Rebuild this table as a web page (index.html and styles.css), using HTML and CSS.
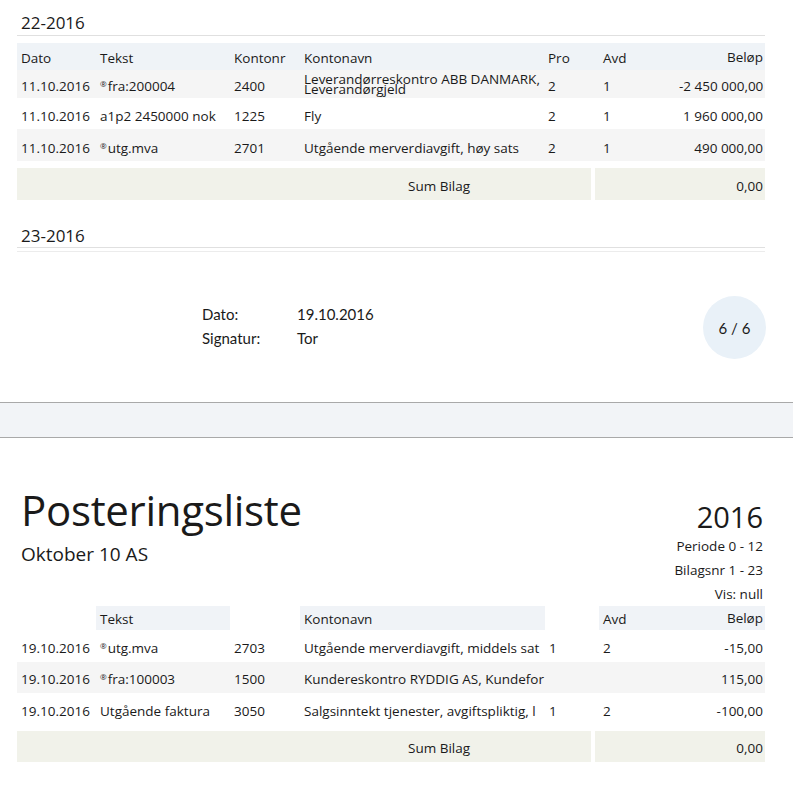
FILE: index.html
```html
<!DOCTYPE html>
<html lang="no">
<head>
<meta charset="utf-8">
<title>Posteringsliste</title>
<link rel="stylesheet" href="styles.css">
</head>
<body>
<div class="sheet">
  <h2 class="bilag-title">22-2016</h2>
  <table class="ledger">
    <colgroup>
      <col class="c-dato"><col class="c-tekst"><col class="c-konto"><col class="c-navn"><col class="c-pro"><col class="c-avd"><col class="c-belop">
    </colgroup>
    <thead>
      <tr class="head">
        <th>Dato</th><th>Tekst</th><th>Kontonr</th><th>Kontonavn</th><th>Pro</th><th>Avd</th><th class="num">Beløp</th>
      </tr>
    </thead>
    <tbody>
      <tr class="r1 shade">
        <td>11.10.2016</td><td><span class="reg">®</span>fra:200004</td><td>2400</td><td><div class="wrap2">Leverandørreskontro ABB DANMARK, Leverandørgjeld</div></td><td>2</td><td>1</td><td class="num">-2 450 000,00</td>
      </tr>
      <tr class="r2">
        <td>11.10.2016</td><td>a1p2 2450000 nok</td><td>1225</td><td>Fly</td><td>2</td><td>1</td><td class="num">1 960 000,00</td>
      </tr>
      <tr class="r3 shade">
        <td>11.10.2016</td><td><span class="reg">®</span>utg.mva</td><td>2701</td><td>Utgående merverdiavgift, høy sats</td><td>2</td><td>1</td><td class="num">490 000,00</td>
      </tr>
    </tbody>
  </table>
  <div class="sum-row">
    <div class="sum-label">Sum Bilag</div>
    <div class="sum-value">0,00</div>
  </div>

  <h2 class="bilag-title second">23-2016</h2>
  <div class="empty-table"></div>

  <div class="footer-row">
    <dl class="signature">
      <div class="sig-line"><dt>Dato:</dt><dd>19.10.2016</dd></div>
      <div class="sig-line"><dt>Signatur:</dt><dd>Tor</dd></div>
    </dl>
    <div class="page-badge">6 / 6</div>
  </div>
</div>

<div class="page-break"></div>

<div class="sheet sheet2">
  <header class="report-head">
    <div class="report-left">
      <h1 class="report-title">Posteringsliste</h1>
      <div class="company">Oktober 10 AS</div>
    </div>
    <div class="report-right">
      <div class="year">2016</div>
      <div class="meta">Periode 0 - 12</div>
      <div class="meta">Bilagsnr 1 - 23</div>
      <div class="meta">Vis: null</div>
    </div>
  </header>
  <table class="ledger ledger2">
    <colgroup>
      <col class="c-dato"><col class="c-tekst"><col class="c-konto"><col class="c-navn2"><col class="c-pro2"><col class="c-avd"><col class="c-belop">
    </colgroup>
    <thead>
      <tr class="head2">
        <th class="blank"></th><th>Tekst</th><th class="blank"></th><th>Kontonavn</th><th class="blank"></th><th>Avd</th><th class="num">Beløp</th>
      </tr>
    </thead>
    <tbody>
      <tr class="q1">
        <td>19.10.2016</td><td><span class="reg">®</span>utg.mva</td><td>2703</td><td>Utgående merverdiavgift, middels sat</td><td class="pro">1</td><td>2</td><td class="num">-15,00</td>
      </tr>
      <tr class="q2 shade">
        <td>19.10.2016</td><td><span class="reg">®</span>fra:100003</td><td>1500</td><td>Kundereskontro RYDDIG AS, Kundefor</td><td class="pro"></td><td></td><td class="num">115,00</td>
      </tr>
      <tr class="q3">
        <td>19.10.2016</td><td>Utgående faktura</td><td>3050</td><td>Salgsinntekt tjenester, avgiftspliktig, l</td><td class="pro">1</td><td>2</td><td class="num">-100,00</td>
      </tr>
    </tbody>
  </table>
  <div class="sum-row sum2">
    <div class="sum-label">Sum Bilag</div>
    <div class="sum-value">0,00</div>
  </div>
</div>
</body>
</html>
```

FILE: styles.css
```css
* { box-sizing: border-box; }

html, body {
  margin: 0;
  padding: 0;
  background: #ffffff;
}

body {
  font-family: "Open Sans", "Noto Sans", sans-serif;
  font-size: 13.5px;
  color: #1a1a1a;
}

.sheet {
  width: 748px;
  margin-left: 17px;
}

.bilag-title {
  margin: 11px 0 0;
  padding-left: 4px;
  height: 25px;
  line-height: 24px;
  font-size: 17px;
  font-weight: 400;
  border-bottom: 1px solid #e0e0e0;
}

.bilag-title.second {
  margin-top: 24px;
  height: 24px;
  line-height: 23px;
}

.empty-table {
  margin-top: 3px;
  border-top: 1px solid #ececec;
}

.ledger {
  width: 748px;
  margin-top: 7px;
  table-layout: fixed;
  border-collapse: collapse;
  border-spacing: 0;
}

.c-dato { width: 79px; }
.c-tekst { width: 134px; }
.c-konto { width: 70px; }
.c-navn { width: 244px; }
.c-pro { width: 55px; }
.c-avd { width: 80px; }
.c-belop { width: 86px; }
.c-navn2 { width: 245px; }
.c-pro2 { width: 54px; }

.ledger th,
.ledger td {
  padding: 0 0 0 4px;
  text-align: left;
  font-weight: 400;
  white-space: nowrap;
  overflow: hidden;
  vertical-align: middle;
}

.ledger .num {
  text-align: right;
  padding: 0 2px 0 0;
}

.head th {
  background: #eff3f7;
  height: 27px;
  padding-top: 3px;
}

.shade td { background: #f5f5f5; }

.r1 td { height: 28px; padding-top: 3px; }
.r2 td { height: 31px; padding-top: 5px; }
.r3 td { height: 32px; padding-top: 5px; }

.r1 td.num { padding-top: 3px; }
.r2 td.num, .r3 td.num { padding-top: 5px; }

.wrap2 {
  white-space: normal;
  line-height: 10px;
  width: 240px;
  margin-top: -3px;
}

.reg {
  font-size: 8px;
  vertical-align: 4px;
  margin-right: 1px;
}

.sum-row {
  display: flex;
  gap: 4px;
  margin-top: 7px;
  height: 32px;
}

.sum-label,
.sum-value {
  background: #f1f2ea;
  display: flex;
  align-items: center;
  padding-top: 3px;
}

.sum-label {
  width: 574px;
  padding-left: 391px;
}

.sum-value {
  flex: 1;
  justify-content: flex-end;
  padding-right: 2px;
}

.footer-row {
  display: flex;
  align-items: center;
  justify-content: space-between;
  margin-top: 44px;
  height: 63px;
}

.signature {
  margin: -4px 0 0 185px;
  font-family: Lato, "Open Sans", sans-serif;
  font-size: 15px;
}

.sig-line {
  display: flex;
  height: 24px;
  align-items: center;
}

.sig-line dt {
  width: 95px;
}

.sig-line dd {
  margin: 0;
}

.page-badge {
  width: 63px;
  height: 63px;
  margin-right: -1px;
  border-radius: 50%;
  background: #e9f1f8;
  display: flex;
  align-items: center;
  justify-content: center;
  font-family: Lato, "Open Sans", sans-serif;
  font-size: 15px;
}

.page-break {
  margin-top: 43px;
  height: 36px;
  border-top: 1px solid #a9a9a9;
  border-bottom: 1px solid #a9a9a9;
  background: #f2f4f7;
}

.report-head {
  display: flex;
  justify-content: space-between;
  margin-top: 46px;
}

.report-left {
  padding-left: 4px;
}

.report-title {
  margin: 0;
  font-size: 42px;
  font-weight: 400;
  line-height: 52px;
  letter-spacing: -0.3px;
}

.company {
  font-size: 19px;
  line-height: 24px;
  margin-top: 6px;
}

.report-right {
  text-align: right;
  padding-right: 2px;
  padding-top: 16px;
}

.year {
  font-size: 29px;
  line-height: 34px;
}

.meta {
  line-height: 24px;
}

.ledger2 {
  margin-top: 0;
}

.head2 th {
  height: 24px;
  background: #f0f3f7;
  padding-top: 2px;
}

.head2 th.blank {
  background: transparent;
}

.q1 td { height: 32px; padding-top: 4px; }
.q2 td { height: 31px; padding-top: 3px; }
.q3 td { height: 32px; padding-top: 4px; }
.q1 td.num, .q3 td.num { padding-top: 4px; }
.q2 td.num { padding-top: 3px; }

.sum2 {
  margin-top: 6px;
  height: 31px;
}
```
